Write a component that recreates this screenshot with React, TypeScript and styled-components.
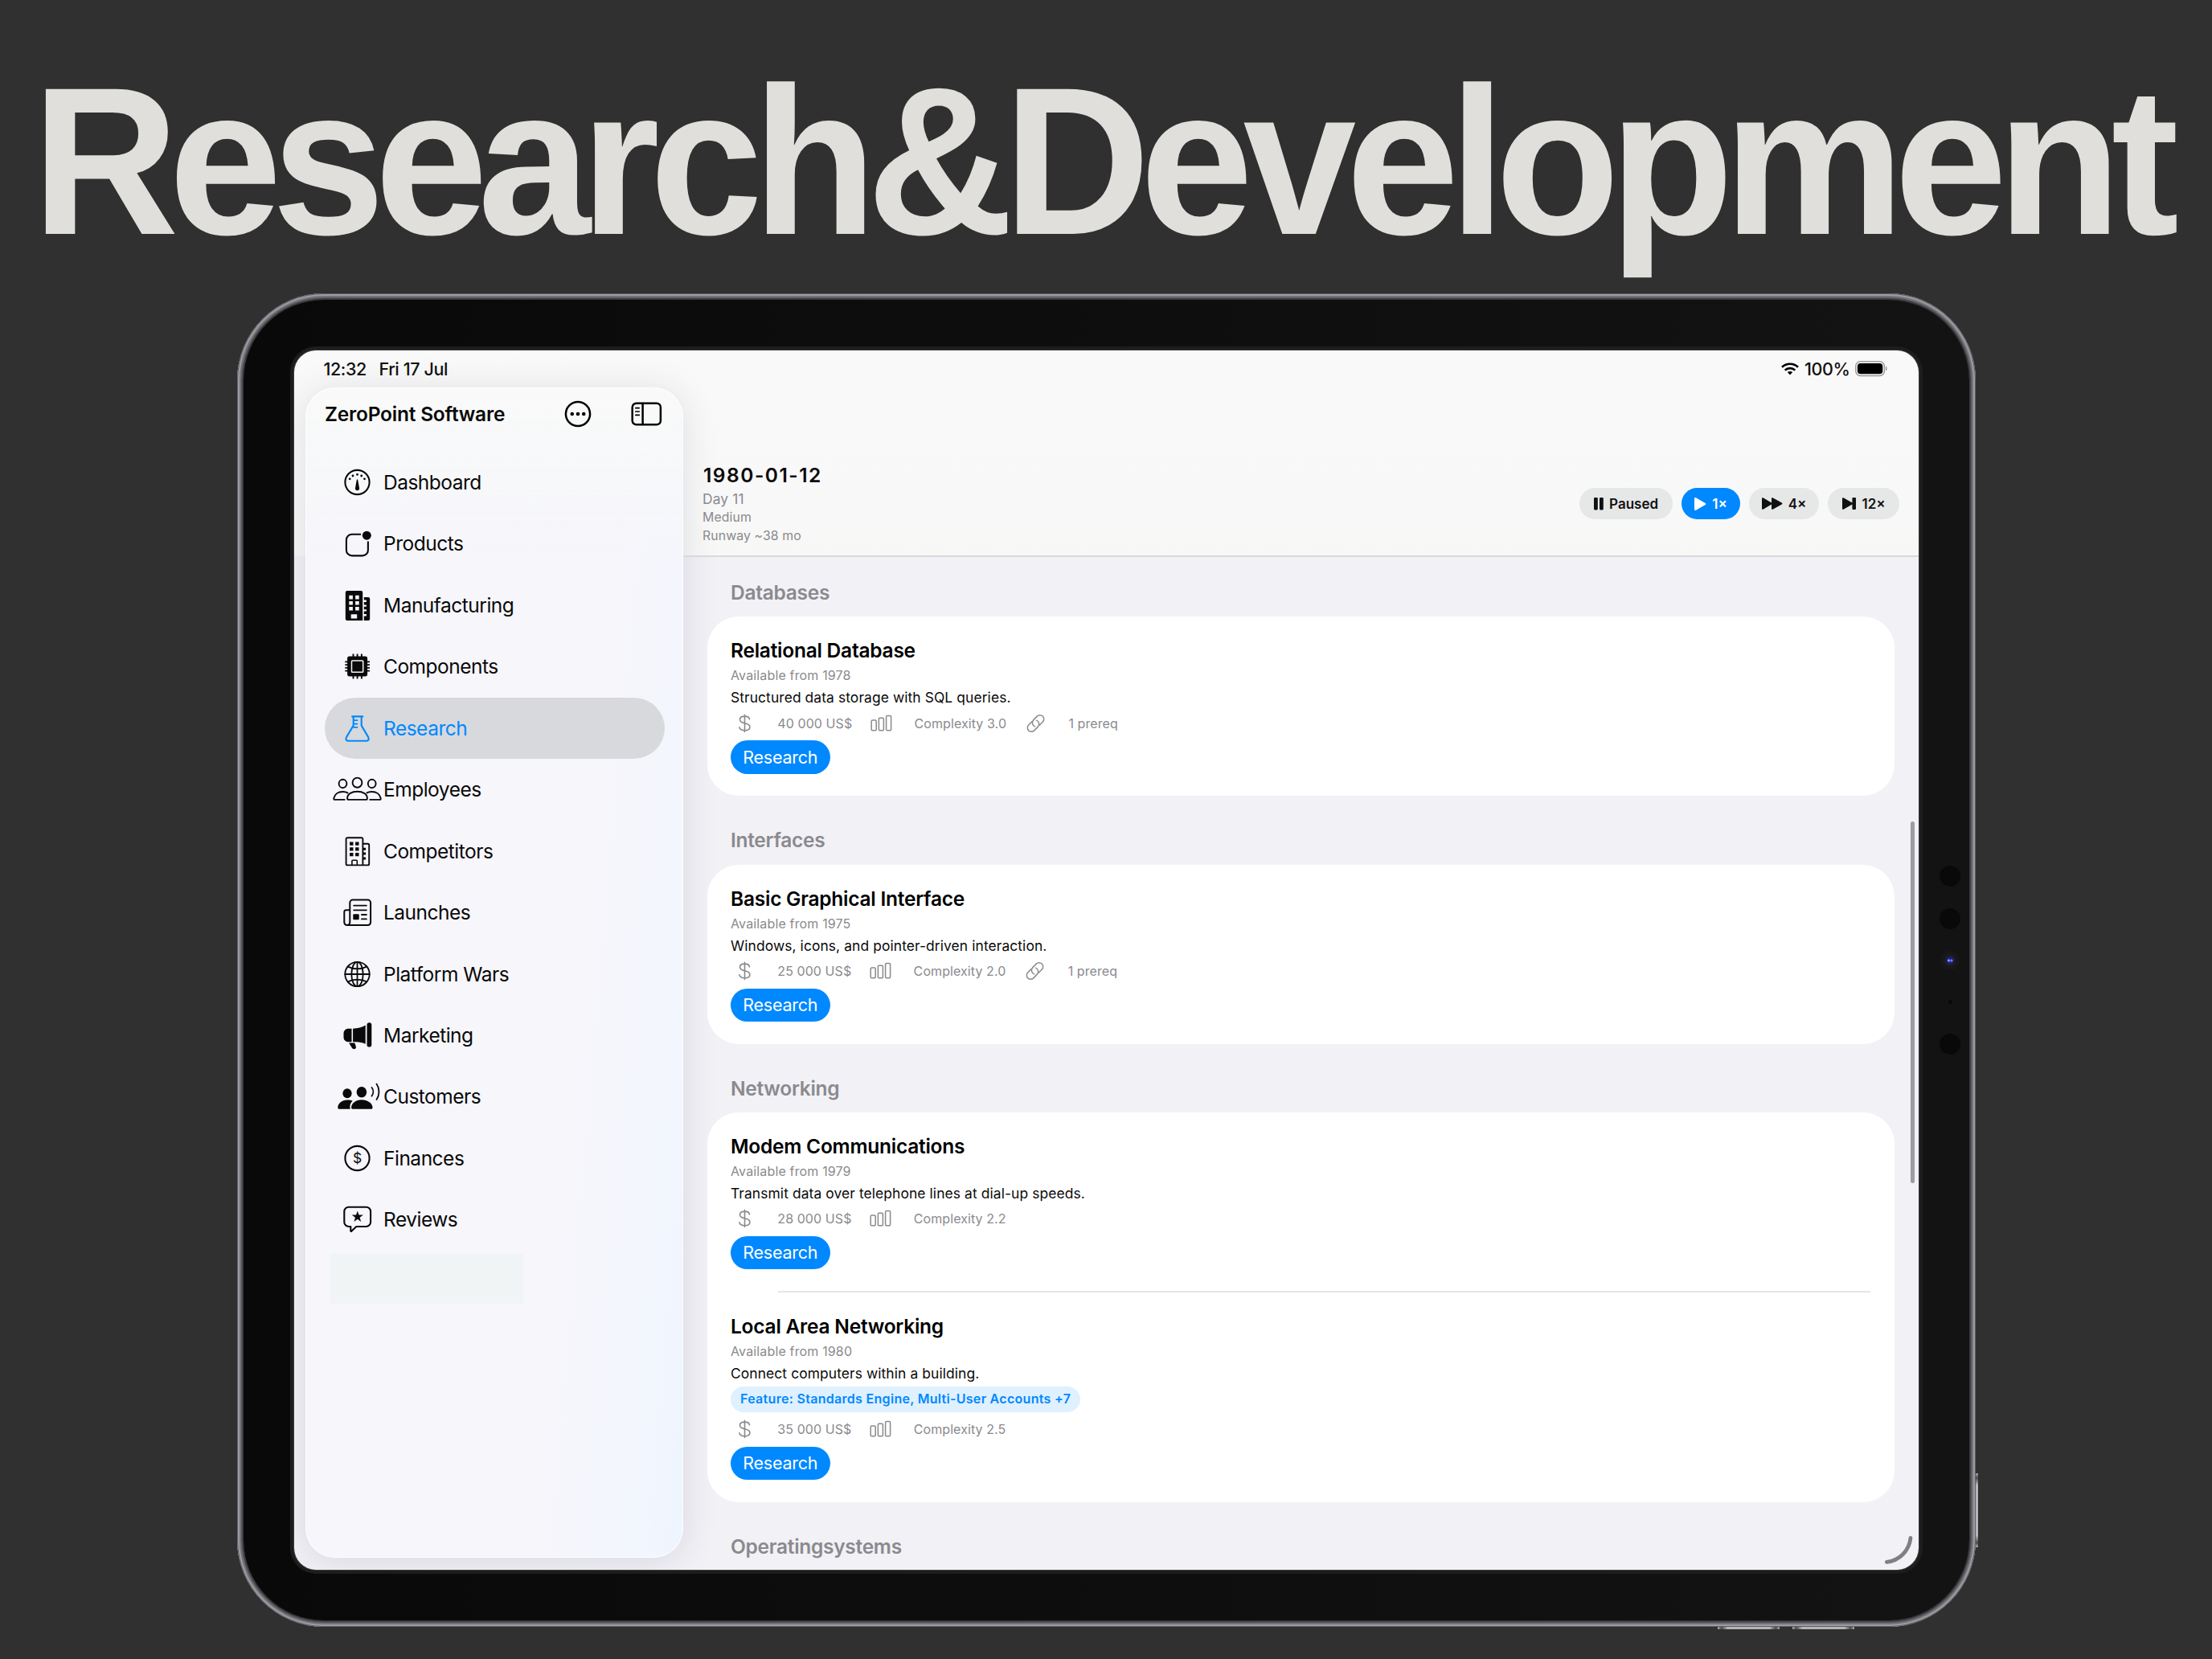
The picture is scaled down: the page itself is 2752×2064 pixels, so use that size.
import React from "react";
import styled, { createGlobalStyle, css } from "styled-components";

const BLUE = "#0088ff";
const GREY = "#8a8a8e";

const GlobalStyle = createGlobalStyle`
  * { box-sizing: border-box; }
  html, body { margin: 0; padding: 0; background: #303030; }
  body { font-family: Inter, "Liberation Sans", sans-serif; color: #0a0a0a; overflow: hidden; }
`;

const Page = styled.main`
  width: 2752px;
  height: 2064px;
  overflow: hidden;
  display: flex;
  flex-direction: column;
  align-items: flex-start;
  background: #303030;
`;

const Headline = styled.h1`
  flex: none;
  margin: 0;
  height: 365px;
  padding-top: 51px;
  padding-left: 40px;
  font-family: "Liberation Sans", Arial, sans-serif;
  font-size: 262px;
  line-height: 300px;
  font-weight: 700;
  letter-spacing: -13px;
  white-space: nowrap;
  color: #e0dfdb;
  transform: scaleX(0.9652);
  transform-origin: 40px 0;
`;

/* ---------- tablet ---------- */

const Device = styled.div`
  position: relative;
  flex: none;
  width: 2163px;
  height: 1659px;
  margin-left: 295px;
  padding: 8px;
  border-radius: 108px;
  background: #77777c;
  box-shadow: inset 0 0 0 1px #5d5d62, inset 0 0 0 3px #9c9ca3, inset 0 0 0 5px #737378, inset 0 0 0 8px #55555a;
`;

const Bezel = styled.div`
  width: 100%;
  height: 100%;
  padding: 63px;
  border-radius: 100px;
  background: linear-gradient(90deg, #090909, #131313);
  box-shadow: 0 0 0 1.5px #38383b;
`;

const HardwareKey = styled.span<{ $x: number; $y: number; $w: number; $h: number }>`
  position: absolute;
  left: ${(p) => p.$x}px;
  top: ${(p) => p.$y}px;
  width: ${(p) => p.$w}px;
  height: ${(p) => p.$h}px;
  background: linear-gradient(
    ${(p) => (p.$w > p.$h ? "90deg" : "180deg")},
    #a9a9ae, #4a4a4d 6%, #b4b4ba 16%, #b4b4ba 84%, #4a4a4d 94%, #a9a9ae
  );
`;

const Sensor = styled.span<{ $y: number; $size: number }>`
  position: absolute;
  left: ${(p) => 2131 - p.$size / 2}px;
  top: ${(p) => p.$y - p.$size / 2}px;
  width: ${(p) => p.$size}px;
  height: ${(p) => p.$size}px;
  border-radius: 50%;
  background: #090909;
`;

const Camera = styled(Sensor)`
  background:
    radial-gradient(circle at 10.5px 12px, #7f9cf5 0 1px, transparent 2px),
    radial-gradient(circle at 14px 12px, #6d7cf0 0 1px, transparent 2px),
    radial-gradient(circle, #20208a 0 3px, #1c1e30 5px, #171718 8px, #161616 100%);
`;

const Screen = styled.div`
  position: relative;
  width: 2021px;
  height: 1517px;
  overflow: hidden;
  border-radius: 27px;
  display: grid;
  grid-template: 46px 1fr / 484px 1fr;
  background: linear-gradient(#f9f9f9 0, #f8f8f8 200px, #f7f8f6 256px, #f2f1f6 256px);
`;

const ScreenRing = styled.div`
  border-radius: 27px;
  box-shadow: 0 0 0 1px #3c3c3c, 0 0 0 5px #1d1d1d;
`;

/* ---------- status bar ---------- */

const StatusBar = styled.header`
  grid-column: 1 / -1;
  display: flex;
  align-items: center;
  padding: 0 38px 0 36.5px;
  font-size: 21.5px;
  line-height: 26px;
  font-weight: 500;
  letter-spacing: -0.4px;
  color: #111;
`;

const StatusDate = styled.span`
  margin-left: 15.5px;
  flex: 1;
`;

const StatusRight = styled.div`
  display: flex;
  align-items: center;
  gap: 7px;
`;

const BatteryLevel = styled.span`
  margin-right: -0.5px;
`;

/* ---------- sidebar ---------- */

const Sidebar = styled.aside`
  margin: 0 0 15px 14px;
  border-radius: 37px;
  padding: 0 23px;
  border: 1.5px solid rgba(255, 255, 255, 0.85);
  background:
    linear-gradient(#f9f9f9 0, rgba(248, 249, 249, 0.9) 70px, rgba(247, 248, 252, 0) 210px),
    linear-gradient(95deg, #f6f6fb 70%, #f2f6fe 92%, #eef5ff);
  box-shadow: 0 4px 44px rgba(40, 50, 80, 0.13);
`;

const SidebarTop = styled.div`
  display: flex;
  align-items: center;
  height: 64px;
  padding: 0 2.5px 0 0;
`;

const CompanyName = styled.h2`
  margin: 0;
  flex: 1;
  font-size: 24.5px;
  line-height: 32px;
  font-weight: 600;
  letter-spacing: -0.22px;
  white-space: nowrap;
`;

const TopIcons = styled.div`
  display: flex;
  align-items: center;
  gap: 49px;
`;

const NavList = styled.nav`
  display: flex;
  flex-direction: column;
  padding-top: 14.8px;
`;

const NavItem = styled.a<{ $active?: boolean }>`
  flex: none;
  display: flex;
  align-items: center;
  height: 76.45px;
  margin-right: -1px;
  padding-left: 9px;
  border-radius: 38px;
  font-size: 24.5px;
  letter-spacing: -0.5px;
  white-space: nowrap;
  ${(p) =>
    p.$active &&
    css`
      color: ${BLUE};
      background: #d8d9dc;
    `}
`;

const NavIcon = styled.svg`
  flex: none;
  width: 63px;
  height: 44px;
  overflow: visible;
  margin-right: 1px;
`;

const RedactedRow = styled.div`
  width: 240px;
  height: 62px;
  margin: 4.5px 0 0 6.5px;
  background: #f0f4f5;
`;

/* ---------- main ---------- */

const Main = styled.section`
  display: flex;
  flex-direction: column;
  min-width: 0;
  min-height: 0;
`;

const GameBar = styled.header`
  flex: none;
  display: flex;
  justify-content: space-between;
  align-items: center;
  height: 211px;
  padding: 94px 24px 13.5px 24px;
  border-bottom: 2px solid #d9d9da;
`;

const Clock = styled.div`
  display: flex;
  flex-direction: column;
  font-size: 15.8px;
  line-height: 23px;
  letter-spacing: 0.12px;
  color: ${GREY};
`;

const ClockDate = styled.strong`
  margin: 0 0 2.5px 1px;
  font-size: 24.5px;
  line-height: 30px;
  font-weight: 600;
  letter-spacing: 1.5px;
  color: #0a0a0a;
`;

const ClockDay = styled.span`
  font-size: 17.4px;
`;

const SpeedGroup = styled.div`
  display: flex;
  gap: 11.5px;
`;

const SpeedButton = styled.button<{ $active?: boolean; $w: number }>`
  display: flex;
  align-items: center;
  justify-content: center;
  gap: 7px;
  width: ${(p) => p.$w}px;
  height: 39px;
  padding: 0;
  border: 0;
  border-radius: 20px;
  font: 600 17px/22px Inter, "Liberation Sans", sans-serif;
  letter-spacing: 0;
  color: ${(p) => (p.$active ? "#fff" : "#111")};
  background: ${(p) => (p.$active ? BLUE : "#e6e7e7")};
`;

const ResearchList = styled.div`
  flex: 1;
  min-height: 0;
  overflow: hidden;
  padding: 0 30px 0 30px;
`;

const SectionTitle = styled.h3`
  margin: 0;
  padding: 39px 29px 14.3px;
  font-size: 24.5px;
  line-height: 32px;
  font-weight: 600;
  letter-spacing: -0.28px;
  color: ${GREY};
  &:first-child {
    padding-top: 28px;
  }
`;

const Card = styled.div`
  border-radius: 39px;
  background: #fff;
`;

const Entry = styled.article`
  display: flex;
  flex-direction: column;
  align-items: flex-start;
  gap: 6px;
  padding: 26px 29px 27.5px;
`;

const Divider = styled.hr`
  margin: -1px 30px 0 88px;
  height: 2px;
  border: 0;
  background: #e6e6e8;
`;

const EntryTitle = styled.h4`
  margin: 0;
  font-size: 24.5px;
  line-height: 32px;
  font-weight: 600;
  letter-spacing: -0.24px;
  color: #000;
`;

const EntryYear = styled.div`
  font-size: 16px;
  line-height: 19px;
  margin-bottom: 1px;
  letter-spacing: 0.15px;
  color: ${GREY};
`;

const EntryText = styled.div`
  font-size: 17.4px;
  line-height: 21px;
  letter-spacing: 0.1px;
`;

const Chip = styled.div`
  height: 31.7px;
  padding: 0 12px;
  border-radius: 16px;
  font-size: 16px;
  line-height: 31.7px;
  font-weight: 600;
  letter-spacing: 0.3px;
  white-space: nowrap;
  color: ${BLUE};
  background: #dff0ff;
`;

const Facts = styled.div`
  display: flex;
  gap: 19px;
  height: 31px;
  font-size: 16px;
  line-height: 32px;
  letter-spacing: 0.08px;
  color: ${GREY};
`;

const Fact = styled.span`
  display: flex;
  align-items: center;
  gap: 23.3px;
  white-space: pre;
`;

const FactIcon = styled.svg`
  width: 35px;
  height: 26px;
  overflow: visible;
`;

const ResearchButton = styled.button`
  width: 123.5px;
  height: 41.5px;
  padding: 0;
  border: 0;
  border-radius: 21px;
  font: 400 21.5px/41px Inter, "Liberation Sans", sans-serif;
  letter-spacing: -0.25px;
  color: #fff;
  background: ${BLUE};
`;

const ScrollThumb = styled.span`
  position: absolute;
  left: 2011px;
  top: 586px;
  width: 5px;
  height: 450px;
  border-radius: 3px;
  background: #9d9da1;
`;

const ResizeHandle = styled.svg`
  position: absolute;
  left: 1976px;
  top: 1471px;
`;

/* ---------- icons ---------- */

type IconName =
  | "gauge" | "badge" | "buildingFill" | "chip" | "flask" | "people" | "building"
  | "news" | "globe" | "megaphone" | "crowd" | "dollar" | "review";

const glyphs: Record<IconName, React.ReactNode> = {
  gauge: (
    <>
      <circle r="15.1" />
      <g fill="currentColor" stroke="none">
        <circle cx="-9.3" cy="-4.2" r="1.4" />
        <circle cx="-5.5" cy="-8" r="1.4" />
        <circle cx="0" cy="-9.7" r="1.4" />
        <circle cx="5.2" cy="-8" r="1.4" />
        <circle cx="9" cy="-4.2" r="1.4" />
        <path d="M-.6 -3.6h1.2L2.6 7.6A2.6 2.6 0 1 1 -2.6 7.6Z" />
      </g>
    </>
  ),
  badge: (
    <>
      <path strokeLinecap="butt" d="M4.6 -11.3H-6.6a7 7 0 0 0-7 7V8.4a7 7 0 0 0 7 7H6.4a7 7 0 0 0 7-7V-2.6" />
      <circle cx="11.8" cy="-9.8" r="5.5" fill="currentColor" stroke="none" />
    </>
  ),
  buildingFill: (
    <g fill="currentColor" stroke="none" fillRule="evenodd">
      <path d="M-12.7-18H4.7a2 2 0 0 1 2 2V19H-12.7a2 2 0 0 1-2-2V-16a2 2 0 0 1 2-2ZM-10.2-12.2v4.8h4.6V-12.2ZM-2.4-12.2v4.8H2.2V-12.2ZM-10.2-5v4.6h4.6V-5ZM-2.4-5v4.6H2.2V-5ZM-10.2 2v4.6h4.6V2ZM-2.4 2v4.6H2.2V2ZM-7.8 11.2v5.3H-.3V11.2Z" />
      <path d="M8.3-10h5.4a2 2 0 0 1 2 2V17a2 2 0 0 1-2 2H8.3V13.4H11.4V11H8.3V7.6H11.4V5.2H8.3V1.8H11.4V-.6H8.3V-4H11.4V-6.4H8.3Z" />
    </g>
  ),
  chip: (
    <>
      <rect x="-12.4" y="-12.4" width="25" height="24.8" rx="2.6" fill="currentColor" stroke="none" />
      <path strokeWidth="1.9" strokeLinecap="butt" d="M-5-15.6V15.6M.1-15.6V15.6M5.4-15.6V15.6M-15.2-5.6H15.5M-15.2-1.9H15.5M-15.2 1.9H15.5M-15.2 5.6H15.5" />
      <rect x="-7" y="-7" width="14.2" height="14.2" rx=".8" stroke="#f6f7fb" strokeWidth="1.5" fill="currentColor" />
    </>
  ),
  flask: (
    <>
      <path d="M-6.3-14.6H6.8M-4.8-14.6V-3.4L-13.2 10.6C-15 14-13.6 15.8-10.8 15.8H11C13.8 15.8 15.2 14 13.4 10.6L5.2-3.4V-14.6" />
      <path strokeWidth="1.7" d="M-4-9.8H0M-4-5.4H0M-4.6-1.2H0" />
    </>
  ),
  people: (
    <g strokeWidth="1.9">
      <ellipse cx="0" cy="-8.3" rx="5.9" ry="6.1" />
      <ellipse cx="-18" cy="-7" rx="4.9" ry="5.2" />
      <ellipse cx="18.2" cy="-7" rx="4.9" ry="5.2" />
      <path d="M-12.4 11.2C-12.4 5.4-6.6 2.8 0 2.8S12.4 5.4 12.4 11.2C12.4 12.4 11.8 12.9 10.8 12.9H-10.8C-11.8 12.9-12.4 12.4-12.4 11.2Z" />
      <path d="M-15.8 12.9H-28C-29 12.9-29.4 12.3-29.2 11.2-28.2 6.4-24 3-18 3-15.6 3-13.6 3.4-12 4.4M15.8 12.9H28C29 12.9 29.4 12.3 29.2 11.2 28.2 6.4 24 3 18 3 15.6 3 13.6 3.4 12 4.4" />
    </g>
  ),
  building: (
    <g strokeWidth="1.9">
      <path d="M-12.2-16.8H5.2A1.7 1.7 0 0 1 6.9-15.1V17.4H-12.2A1.7 1.7 0 0 1-13.9 15.7V-15.1A1.7 1.7 0 0 1-12.2-16.8ZM6.9-9.2H13A1.7 1.7 0 0 1 14.7-7.5V15.7A1.7 1.7 0 0 1 13 17.4H6.9" />
      <path d="M-6.6 17V12.2A1 1 0 0 1-5.6 11.2H-1.2A1 1 0 0 1-.2 12.2V17" strokeWidth="1.6" />
      <path fill="currentColor" stroke="none" d="M-9.4-11.4h4.4v4.2h-4.4ZM-2.4-11.4H2v4.2h-4.4ZM-9.4-4.7h4.4v4.2h-4.4ZM-2.4-4.7H2v4.2h-4.4ZM-9.4 2h4.4v4.2h-4.4ZM-2.4 2H2v4.2h-4.4ZM7.5-4.2H10.6V-1.2H7.5ZM7.5 1.6H10.6V4.6H7.5ZM7.5 7.4H10.6V10.4H7.5Z" />
    </g>
  ),
  news: (
    <g strokeWidth="2">
      <path d="M-9.2 12.6V-12A3.4 3.4 0 0 1-5.8-15.4H13.2A3.4 3.4 0 0 1 16.6-12V12.6A3.4 3.4 0 0 1 13.2 16H-12.8A3.4 3.4 0 0 1-16.2 12.6V-.4A2.4 2.4 0 0 1-13.8-2.8H-9.2M-9.2 12.6A3.4 3.4 0 0 1-12.6 16" />
      <path strokeWidth="1.8" d="M-4.4-8.4H11.4M-4.4-2.7H11.4M5.4 3H11.4M5.4 8.4H11.4" />
      <rect x="-5.2" y="2.2" width="7.4" height="7" rx="1" fill="currentColor" stroke="none" />
    </g>
  ),
  globe: (
    <g strokeWidth="1.8">
      <circle r="15.2" />
      <ellipse rx="7.2" ry="15.2" />
      <path d="M0-15.2V15.2M-15.2 0H15.2M-11.6-9.4C-5-5.8 5-5.8 11.6-9.4M-11.6 9.4C-5 5.8 5 5.8 11.6 9.4" />
    </g>
  ),
  megaphone: (
    <g fill="currentColor" stroke="none">
      <rect x="12" y="-15.8" width="5.8" height="30.4" rx="2.9" />
      <path d="M-5.4-8.2C1-8.4 6-9.8 10.2-12.4V10.8C6 8.6 1 8.2-5.4 8.2Z" />
      <path d="M-7-8.2V8.2H-11.6A5.4 5.4 0 0 1-17 2.8V-2.8A5.4 5.4 0 0 1-11.6-8.2ZM-10.4 9.6H-3.2L-1.6 14.2C-1 17-5 18.4-6.6 15.8Z" />
    </g>
  ),
  crowd: (
    <>
      <g fill="currentColor" stroke="none">
        <ellipse cx="-12.5" cy="-3.8" rx="5.6" ry="6" />
        <ellipse cx="5.4" cy="-5.2" rx="6.3" ry="6.8" />
        <path d="M-7.4 4.9C-9 4.5-11 4.4-12.6 4.4-19 4.4-24.2 8.8-24.2 13.8-24.2 15.2-23.6 15.8-22.4 15.8H-8.8C-9.8 12-8.8 8-5.8 5.4Z" />
        <path d="M-7.4 13.8C-7.4 8.8-2 4.2 5.4 4.2S19 8.8 19 13.8C19 15.2 18.4 15.8 17.2 15.8H-5.6C-6.8 15.8-7.4 15.2-7.4 13.8Z" />
      </g>
      <path strokeWidth="1.8" d="M18-11C20.4-8 20.4-3.6 18-.4M24-15.4C28-9.6 28-1.8 24 4" />
    </>
  ),
  dollar: (
    <>
      <circle r="15.1" />
      <text x="0" y="6.2" fontSize="17.5" textAnchor="middle" fill="currentColor" stroke="none" letterSpacing="0">$</text>
    </>
  ),
  review: (
    <>
      <path d="M-10.6-15.3H11A5.6 5.6 0 0 1 16.6-9.7V3.4A5.6 5.6 0 0 1 11 9H-1.2L-7 14.6C-7.8 15.3-8.2 15-8.2 14.2V9H-10.6A5.6 5.6 0 0 1-16.2 3.4V-9.7A5.6 5.6 0 0 1-10.6-15.3Z" />
      <path fill="currentColor" stroke="none" d="M.3-10.4 2-5.4H7.4L3.1-2.2 4.7 2.9.3-.2-4.1 2.9-2.5-2.2-6.8-5.4H-1.4Z" />
    </>
  ),
};

const NavGlyph = ({ name }: { name: IconName }) => (
  <NavIcon viewBox="-31.5 -22 63 44" fill="none" stroke="currentColor" strokeWidth="2.1" strokeLinecap="round" strokeLinejoin="round">
    {glyphs[name]}
  </NavIcon>
);

const MoreIcon = () => (
  <svg width="34" height="34" viewBox="-17 -17 34 34" fill="none" stroke="#000" strokeWidth="2.5">
    <circle r="15.1" />
    <g fill="#000" stroke="none">
      <circle cx="-7.2" r="2.3" />
      <circle r="2.3" />
      <circle cx="7.2" r="2.3" />
    </g>
  </svg>
);

const PanelIcon = () => (
  <svg width="39" height="30" viewBox="0 0 39 30" fill="none" stroke="#000" strokeWidth="2.5" strokeLinecap="round">
    <rect x="1.7" y="1.7" width="35.2" height="26.6" rx="5" />
    <path d="M14.6 2V28" />
    <path strokeWidth="1.7" d="M5.8 7.6h4.4M5.8 12h4.4M5.8 16.4h4.4" />
  </svg>
);

const WifiIcon = () => (
  <svg width="22" height="16" viewBox="0 0 22 16" fill="none" stroke="#000" strokeWidth="2.7">
    <path d="M1 5.8C6.6 .4 15.4 .4 21 5.8M4.7 9.6C8.2 6.2 13.8 6.2 17.3 9.6" />
    <path d="M11 15.4 7.8 12.1C9.6 10.5 12.4 10.5 14.2 12.1Z" fill="#000" stroke="none" />
  </svg>
);

const BatteryIcon = () => (
  <svg width="41" height="20" viewBox="0 0 41 20">
    <rect x=".8" y=".8" width="35.6" height="17.6" rx="5.6" fill="none" stroke="#9c9c9c" strokeWidth="1.5" />
    <rect x="2.9" y="2.9" width="31.4" height="13.4" rx="3.8" fill="#000" />
    <path d="M38 6.6C40.2 7.6 40.2 11.6 38 12.6Z" fill="#9c9c9c" />
  </svg>
);

const PauseIcon = () => (
  <svg width="12" height="16" viewBox="0 0 12 16" fill="currentColor">
    <rect width="4.8" height="15.4" rx="1.3" />
    <rect x="7" width="4.8" height="15.4" rx="1.3" />
  </svg>
);
const PlayIcon = () => (
  <svg width="15" height="16" viewBox="0 0 15 16" fill="currentColor">
    <path d="M0 1.2C0 .1 1 -.2 2 .3L13.6 6.9C14.6 7.5 14.6 8.5 13.6 9.1L2 15.7C1 16.2 0 15.9 0 14.8Z" />
  </svg>
);
const ForwardIcon = () => (
  <svg width="26" height="15" viewBox="0 0 26 15" fill="currentColor">
    <path d="M0 1.2C0 .1 1 -.1 1.9 .4L12 6.4V1.2C12 .1 13 -.1 13.9 .4L24.8 6.5C25.7 7.1 25.7 7.9 24.8 8.5L13.9 14.6C13 15.1 12 14.9 12 13.8V8.6L1.9 14.6C1 15.1 0 14.9 0 13.8Z" />
  </svg>
);
const SkipIcon = () => (
  <svg width="18" height="15" viewBox="0 0 18 15" fill="currentColor">
    <path d="M0 1.2C0 .1 1 -.1 1.9 .4L12.4 6.5V1.3A1.3 1.3 0 0 1 13.7 0H15.7A1.3 1.3 0 0 1 17 1.3V13.7A1.3 1.3 0 0 1 15.7 15H13.7A1.3 1.3 0 0 1 12.4 13.7V8.5L1.9 14.6C1 15.1 0 14.9 0 13.8Z" />
  </svg>
);

const CostIcon = () => (
  <FactIcon viewBox="-17.5 -13 35 26" fill="none" stroke="currentColor" strokeWidth="1.6" strokeLinecap="round">
    <path d="M0-10.6V10.4M6-5.2C5.6-7.8 3.4-8.9 0-8.9-3.6-8.9-6-7.2-6-4.7-6-2.1-4-1.1 0-.2 4.4 .7 6.4 2 6.4 4.5 6.4 7.2 4 8.8 0 8.8-3.8 8.8-6.2 7.4-6.6 4.7" />
  </FactIcon>
);
const BarsIcon = () => (
  <FactIcon viewBox="-17.5 -13 35 26" fill="none" stroke="currentColor" strokeWidth="1.5">
    <rect x="-12.3" y="-4" width="6" height="12.8" rx="1.3" />
    <rect x="-3.1" y="-6.8" width="6" height="15.6" rx="1.3" />
    <rect x="6.1" y="-9.6" width="6" height="18.4" rx="1.3" />
  </FactIcon>
);
const LinkIcon = () => (
  <FactIcon viewBox="-17.5 -13 35 26" fill="none" stroke="currentColor" strokeWidth="1.5" strokeLinecap="round">
    <g transform="rotate(-46)">
      <path d="M-1.6-4.9H-7.6A4.9 4.9 0 0 0-7.6 4.9H-1A4.9 4.9 0 0 0 3.4-2" />
      <path d="M1.6 4.9H7.6A4.9 4.9 0 0 0 7.6-4.9H1A4.9 4.9 0 0 0-3.4 2" />
    </g>
  </FactIcon>
);

/* ---------- data ---------- */

const nav: { label: string; icon: IconName }[] = [
  { label: "Dashboard", icon: "gauge" },
  { label: "Products", icon: "badge" },
  { label: "Manufacturing", icon: "buildingFill" },
  { label: "Components", icon: "chip" },
  { label: "Research", icon: "flask" },
  { label: "Employees", icon: "people" },
  { label: "Competitors", icon: "building" },
  { label: "Launches", icon: "news" },
  { label: "Platform Wars", icon: "globe" },
  { label: "Marketing", icon: "megaphone" },
  { label: "Customers", icon: "crowd" },
  { label: "Finances", icon: "dollar" },
  { label: "Reviews", icon: "review" },
];

interface Tech {
  title: string;
  year: number;
  text: string;
  cost: string;
  complexity: string;
  prereq?: string;
  feature?: string;
}

const sections: { title: string; items: Tech[] }[] = [
  {
    title: "Databases",
    items: [{ title: "Relational Database", year: 1978, text: "Structured data storage with SQL queries.", cost: "40 000 US$", complexity: "3.0", prereq: "1 prereq" }],
  },
  {
    title: "Interfaces",
    items: [{ title: "Basic Graphical Interface", year: 1975, text: "Windows, icons, and pointer-driven interaction.", cost: "25 000 US$", complexity: "2.0", prereq: "1 prereq" }],
  },
  {
    title: "Networking",
    items: [
      { title: "Modem Communications", year: 1979, text: "Transmit data over telephone lines at dial-up speeds.", cost: "28 000 US$", complexity: "2.2" },
      { title: "Local Area Networking", year: 1980, text: "Connect computers within a building.", cost: "35 000 US$", complexity: "2.5", feature: "Feature: Standards Engine, Multi-User Accounts +7" },
    ],
  },
  { title: "Operatingsystems", items: [] },
];

const TechEntry = ({ tech }: { tech: Tech }) => (
  <Entry>
    <EntryTitle>{tech.title}</EntryTitle>
    <EntryYear>Available from {tech.year}</EntryYear>
    <EntryText>{tech.text}</EntryText>
    {tech.feature && <Chip>{tech.feature}</Chip>}
    <Facts>
      <Fact><CostIcon />{tech.cost}</Fact>
      <Fact><BarsIcon /><span>Complexity {tech.complexity}</span></Fact>
      {tech.prereq && <Fact><LinkIcon />{tech.prereq}</Fact>}
    </Facts>
    <ResearchButton>Research</ResearchButton>
  </Entry>
);

export default function App() {
  return (
    <Page>
      <GlobalStyle />
      <Headline>Research&amp;Development</Headline>
      <Device>
        <HardwareKey $x={2163} $y={1468} $w={3} $h={92} />
        <HardwareKey $x={1842} $y={1659} $w={77} $h={3} />
        <HardwareKey $x={1935} $y={1659} $w={77} $h={3} />
        <Bezel>
          <ScreenRing>
            <Screen>
              <StatusBar>
                <span>12:32</span>
                <StatusDate>Fri 17 Jul</StatusDate>
                <StatusRight>
                  <WifiIcon />
                  <BatteryLevel>100%</BatteryLevel>
                  <BatteryIcon />
                </StatusRight>
              </StatusBar>
              <Sidebar>
                <SidebarTop>
                  <CompanyName>ZeroPoint Software</CompanyName>
                  <TopIcons>
                    <MoreIcon />
                    <PanelIcon />
                  </TopIcons>
                </SidebarTop>
                <NavList>
                  {nav.map((n) => (
                    <NavItem key={n.label} $active={n.label === "Research"}>
                      <NavGlyph name={n.icon} />
                      {n.label}
                    </NavItem>
                  ))}
                  <RedactedRow />
                </NavList>
              </Sidebar>
              <Main>
                <GameBar>
                  <Clock>
                    <ClockDate>1980-01-12</ClockDate>
                    <ClockDay>Day 11</ClockDay>
                    <span>Medium</span>
                    <span>Runway ~38 mo</span>
                  </Clock>
                  <SpeedGroup>
                    <SpeedButton $w={115.7}><PauseIcon />Paused</SpeedButton>
                    <SpeedButton $w={72.5} $active><PlayIcon />1×</SpeedButton>
                    <SpeedButton $w={86.5}><ForwardIcon />4×</SpeedButton>
                    <SpeedButton $w={88.6}><SkipIcon />12×</SpeedButton>
                  </SpeedGroup>
                </GameBar>
                <ResearchList>
                  {sections.map((s) => (
                    <React.Fragment key={s.title}>
                      <SectionTitle>{s.title}</SectionTitle>
                      {s.items.length > 0 && (
                        <Card>
                          {s.items.map((t, i) => (
                            <React.Fragment key={t.title}>
                              {i > 0 && <Divider />}
                              <TechEntry tech={t} />
                            </React.Fragment>
                          ))}
                        </Card>
                      )}
                    </React.Fragment>
                  ))}
                </ResearchList>
              </Main>
              <ScrollThumb />
              <ResizeHandle width="45" height="46" viewBox="0 0 45 46" fill="none">
                <path d="M5.3 36.3C21 34.6 33.4 22.4 35 6.3" stroke="#808080" strokeWidth="4.8" strokeLinecap="round" />
              </ResizeHandle>
            </Screen>
          </ScreenRing>
        </Bezel>
        <Sensor $y={725} $size={26} />
        <Sensor $y={777.5} $size={26} />
        <Camera $y={829.5} $size={24} />
        <Sensor $y={881.5} $size={5} />
        <Sensor $y={933.7} $size={26} />
      </Device>
    </Page>
  );
}
